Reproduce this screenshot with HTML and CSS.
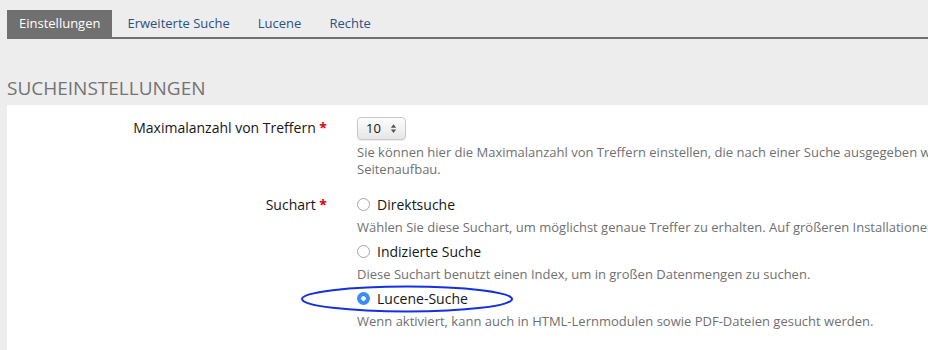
FILE: index.html
```html
<!DOCTYPE html>
<html lang="de">
<head>
    <meta charset="UTF-8">
    <meta name="viewport" content="width=device-width, initial-scale=1.0">
    <title>Sucheinstellungen</title>
    <link rel="stylesheet" href="styles.css">
</head>
<body>
    <!-- Reiter oben -->
    <ul class="tabs">
        <li class="tab active">Einstellungen</li>
        <li class="tab">Erweiterte Suche</li>
        <li class="tab">Lucene</li>
        <li class="tab">Rechte</li>
    </ul>

    <h2 class="section-title">Sucheinstellungen</h2>

    <div class="panel">
        <div class="form-row">
            <div class="form-label">Maximalanzahl von Treffern <span class="req">*</span></div>
            <div class="form-field">
                <div class="select">
                    <span>10</span>
                    <svg class="select-arrows" viewBox="0 0 8 12" width="7" height="11">
                        <path d="M4 1 L7 5 H1 Z" fill="#555"/>
                        <path d="M4 11 L7 7 H1 Z" fill="#555"/>
                    </svg>
                </div>
                <p class="info">Sie können hier die Maximalanzahl von Treffern einstellen, die nach einer Suche ausgegeben werden. Eine hohe Anzahl verlangsamt den Seitenaufbau.</p>
            </div>
        </div>

        <div class="form-row second">
            <div class="form-label">Suchart <span class="req">*</span></div>
            <div class="form-field">
                <div class="option first">
                    <span class="radio"></span>
                    Direktsuche
                </div>
                <p class="info">Wählen Sie diese Suchart, um möglichst genaue Treffer zu erhalten. Auf größeren Installationen kann die Suche sehr lange dauern.</p>

                <div class="option">
                    <span class="radio"></span>
                    Indizierte Suche
                </div>
                <p class="info">Diese Suchart benutzt einen Index, um in großen Datenmengen zu suchen.</p>

                <div class="option marked">
                    <span class="radio checked"></span>
                    Lucene-Suche
                    <!-- Markierung um die Option -->
                    <svg class="ring" viewBox="0 0 216 30" width="216" height="30">
                        <ellipse cx="107" cy="14" rx="105" ry="12.5" fill="none" stroke="#1530e0" stroke-width="2"/>
                    </svg>
                </div>
                <p class="info">Wenn aktiviert, kann auch in HTML-Lernmodulen sowie PDF-Dateien gesucht werden.</p>
            </div>
        </div>
    </div>
</body>
</html>
```

FILE: styles.css
```css
/* Grundlayout */
html, body {
    overflow: hidden;
}

body {
    margin: 0;
    padding: 10px 0 0 7px;
    background-color: #ededed;
    font-family: "Open Sans", "DejaVu Sans", sans-serif;
    color: #161616;
}

/* Reiter */
.tabs {
    list-style: none;
    margin: 0;
    padding: 0;
    display: flex;
    border-bottom: 2px solid #707070;
    height: 27px;
}

.tab {
    padding: 0 13px 0 13px;
    font-size: 13px;
    line-height: 27px;
    color: #2c5282;
    margin-right: 2px;
}

.tab.active {
    background-color: #707070;
    color: #fff;
    padding: 0 12px;
    margin-right: 2px;
}

/* Abschnittstitel */
.section-title {
    margin: 36px 0 0 0;
    font-size: 19px;
    font-weight: normal;
    text-transform: uppercase;
    color: #737373;
    line-height: 26px;
    height: 30px;
}

/* Formular */
.panel {
    background-color: #fff;
    padding-top: 11px;
    height: 236px;
}

.form-row {
    display: grid;
    grid-template-columns: 320px 830px;
    column-gap: 30px;
}

.form-row.second {
    margin-top: 17px;
}

.form-label {
    text-align: right;
    font-size: 14px;
    line-height: 23px;
}

.second .form-label {
    line-height: 20px;
}

.req {
    color: #d00;
    font-weight: bold;
}

.select {
    display: inline-flex;
    align-items: center;
    gap: 9px;
    height: 21px;
    padding: 0 8px 0 8px;
    border: 1px solid #c8c8c8;
    border-radius: 4px;
    background: linear-gradient(#fdfdfd, #e6e6e6);
    font-size: 13px;
    box-shadow: 0 1px 1px rgba(0, 0, 0, 0.08);
}

.info {
    margin: 4px 0 0 0;
    font-size: 13px;
    line-height: 17px;
    color: #707070;
}

.option {
    display: flex;
    align-items: center;
    gap: 7px;
    font-size: 14px;
    line-height: 20px;
    margin-top: 6px;
}

.option.first {
    margin-top: 0;
}

.marked {
    position: relative;
}

.ring {
    position: absolute;
    left: -57px;
    top: -4px;
}

.radio {
    display: inline-block;
    width: 11px;
    height: 11px;
    border: 1px solid #a8a8a8;
    border-radius: 50%;
    background-color: #fff;
}

.radio.checked {
    width: 13px;
    height: 13px;
    border: none;
    background: radial-gradient(circle, #fff 0 2px, #3a8ef3 2.5px);
}
```
